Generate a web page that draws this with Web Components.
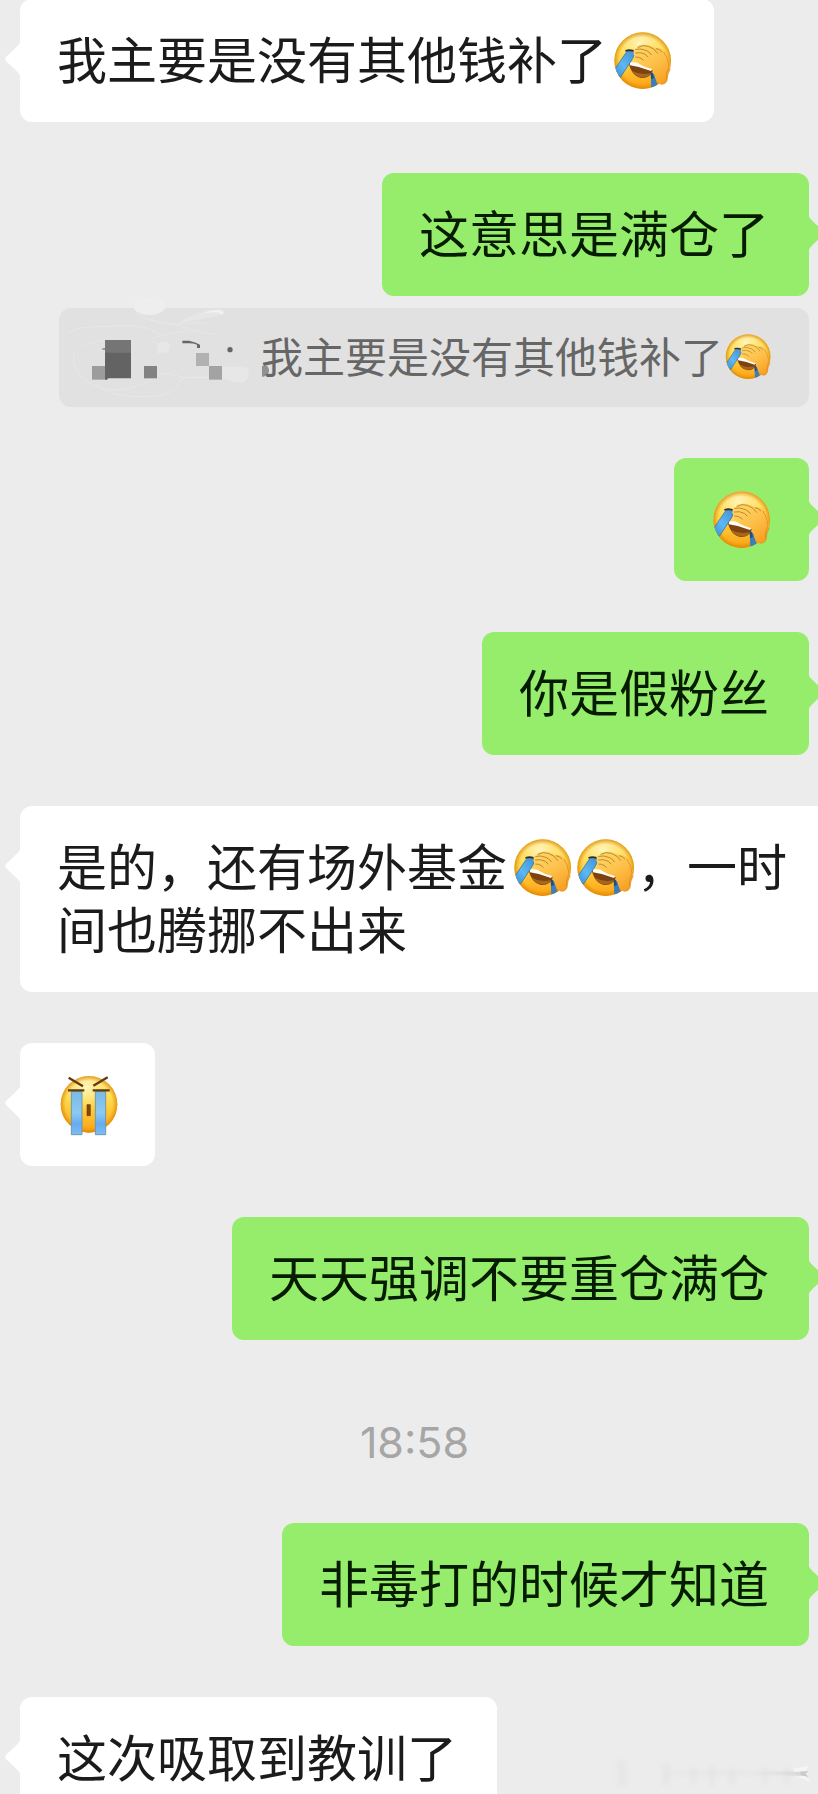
<!DOCTYPE html>
<html lang="zh-CN">
<head>
<meta charset="utf-8">
<meta name="viewport" content="width=device-width, initial-scale=1">
<title>聊天记录</title>
<style>
  body { margin: 0; background: #ececec; font-family: "Noto Sans CJK SC", sans-serif; }
</style>
</head>
<body>
<chat-log>
  <chat-bubble side="left">我主要是没有其他钱补了<emoji-palm></emoji-palm></chat-bubble>
  <chat-reply>
    <chat-bubble side="right">这意思是满仓了</chat-bubble>
    <chat-quote slot="quote">我主要是没有其他钱补了<emoji-palm></emoji-palm></chat-quote>
  </chat-reply>
  <chat-bubble side="right" sticker><emoji-palm></emoji-palm></chat-bubble>
  <chat-bubble side="right">你是假粉丝</chat-bubble>
  <chat-bubble side="left" wide>是的，还有场外基金<emoji-palm></emoji-palm><emoji-palm></emoji-palm>，一时间也腾挪不出来</chat-bubble>
  <chat-bubble side="left" sticker><emoji-cry></emoji-cry></chat-bubble>
  <chat-bubble side="right">天天强调不要重仓满仓</chat-bubble>
  <chat-time>18:58</chat-time>
  <chat-bubble side="right">非毒打的时候才知道</chat-bubble>
  <chat-bubble side="left">这次吸取到教训了</chat-bubble>
</chat-log>

<script>
const define = (name, html) => {
  const template = document.createElement('template');
  template.innerHTML = html;
  customElements.define(name, class extends HTMLElement {
    constructor() {
      super();
      this.attachShadow({ mode: 'open' }).append(template.content.cloneNode(true));
    }
  });
};

define('chat-log', `
<style>
  :host { display: block; position: relative; height: 100vh; overflow: hidden; }
  main { display: flex; flex-direction: column; gap: 51px; margin-top: -1px; padding: 0 9px 0 20px; }
  .stamp { position: absolute; right: 0; bottom: 0; width: 238px; height: 54px; }
</style>
<main><slot></slot></main>
<svg class="stamp" viewBox="0 0 714 162" aria-hidden="true">
  <defs>
    <filter id="soft" x="-20%" y="-20%" width="140%" height="140%"><feGaussianBlur stdDeviation="6"/></filter>
    <linearGradient id="fade" x1="0" x2="1"><stop offset="0" stop-color="#ddd" stop-opacity="0"/><stop offset="1" stop-color="#ccc"/></linearGradient>
  </defs>
  <g filter="url(#soft)" fill="#e4e4e4">
    <path d="M112 60h28v78h-28zM246 70h26v66h-26zM330 80h18v56h-18zM388 80h16v56h-16zM445 85h22v50h-22zM545 80h18v56h-18zM612 80h16v56h-16z" opacity=".7"/>
    <path d="M260 96h410v8H260z"/>
  </g>
  <path d="M520 93l150 2v12l-150-2z" fill="url(#fade)" opacity=".6"/>
  <path d="M640 86l46-9-8 16-36 2zM640 112l34-4 18 18-10-2-12-9z" fill="#f5f5f5"/>
  <path d="M660 95l26-2-10 8 10 10-22-5z" fill="#cacaca"/>
</svg>`);

define('chat-bubble', `
<style>
  :host { display: block; position: relative; align-self: flex-start; box-sizing: border-box;
          padding: 27px 40px 33px 37px; border-radius: 12px; background: #fff; color: #1b1b1b;
          font-size: 50px; line-height: 63px; }
  :host([side=right]) { align-self: flex-end; background: #95ed6b; color: #061c00; }
  :host([sticker]) { padding: 27px 36px 33px; }
  :host([wide]) { align-self: stretch; margin-right: -9px; padding-right: 20px;
          border-radius: 12px 0 0 12px; }
  :host(:not([sticker])) ::slotted(:first-child) { margin-left: 4px; }
  .tail { position: absolute; left: -15px; top: 42px; width: 16px; height: 36px; fill: #fff; }
  :host([side=right]) .tail { left: auto; right: -15px; fill: #95ed6b; transform: scaleX(-1); }
</style>
<svg class="tail" viewBox="0 0 16 36" aria-hidden="true"><path d="M16 0Q14 4 11 6.500L1.500 15.500Q-1 18 1.500 20.500L11 29.500Q14 32 16 36z"/></svg>
<slot></slot>`);

define('chat-reply', `
<style>
  :host { display: flex; flex-direction: column; gap: 12px; }
</style>
<slot></slot><slot name="quote"></slot>`);

define('chat-quote', `
<style>
  :host { display: flex; justify-content: flex-end; align-self: flex-end; border-radius: 12px;
          background: #e1e1e1; color: #666; font-size: 42px; line-height: 51px;
          --emoji-width: 50px; --emoji-height: 45px; --emoji-drop: 5px; }
  .name { flex: none; display: block; width: 202px; height: 99px; overflow: visible; }
  .text { padding: 21px 36px 27px 0; }
</style>
<svg class="name" viewBox="27 54 606 297" aria-hidden="true">
  <g fill="none" stroke="#e8e8e8" stroke-width="3" stroke-linecap="round">
    <path d="M48 135C80 105 130 112 210 108S300 118 330 135"/>
    <path d="M75 180C60 220 80 260 130 285S220 325 310 318S370 270 410 262H500"/>
    <path d="M140 285C180 310 250 300 300 270S350 250 400 262"/>
    <path d="M262 72C300 100 350 90 400 110S480 130 500 135" stroke-width="2"/>
    <path d="M300 90C340 115 420 95 470 100" stroke-width="2"/>
    <path d="M100 165C120 155 140 160 160 150M300 150C340 130 380 125 440 122" stroke-width="2"/>
  </g>
  <ellipse cx="298" cy="49" rx="48" ry="26" fill="#eee"/>
  <path d="M375 108C420 70 470 60 510 57Q530 64 518 74C490 84 460 78 375 108z" fill="#e6e6e6"/>
  <path d="M455 72C480 60 500 58 518 62Q526 70 514 74C500 62 480 68 455 72z" fill="#f1f1f1"/>
  <path d="M322 160l28-6 12 12-8 20-32 4zM516 230h70q12 8 10 30q-10 18-30 18q-20 0-34-10h-16z" fill="#e7e7e7"/>
  <path d="M165 150h78v39h-78z" fill="#757575"/>
  <path d="M165 188h78v77h-68l-4 4h-6z" fill="#636363"/>
  <path d="M126 228h39v41h-39z" fill="#9c9c9c"/>
  <path d="M282 228h39v37h-39z" fill="#828282"/>
  <path d="M438 189h39v39h-39z" fill="#b1b1b1"/>
  <path d="M477 228h39v41h-39z" fill="#a3a3a3"/>
  <path d="M636 228h16q6 8 5 16q-2 14-21 17z" fill="#909090"/>
  <path d="M397 152h20q20 4 33 12v10h-9v-10q-10-4-24-4h-20z" fill="#666"/>
  <path d="M157 177h16" stroke="#777" stroke-width="4"/>
  <circle cx="540" cy="179" r="8" fill="#666"/>
</svg>
<div class="text"><slot></slot></div>`);

define('chat-time', `
<style>
  :host { display: block; padding-top: 21px; text-align: center; color: #a6a6a6;
          font: 43px/60px Inter, "Liberation Sans", sans-serif; }
</style>
<time><slot></slot></time>`);

const emojiStyle = `
<style>
  :host { display: inline-block; vertical-align: top; width: var(--emoji-width, 63px);
          height: var(--emoji-height, 57px); margin-top: var(--emoji-drop, 6px); }
  svg { display: block; width: 100%; height: 100%; overflow: visible; }
</style>`;

const faceGradients = `
<linearGradient id="face" x1="0" y1="0" x2="0" y2="1">
  <stop offset="0" stop-color="#ffe480"/><stop offset=".35" stop-color="#ffdd55"/>
  <stop offset=".7" stop-color="#ffc12e"/><stop offset="1" stop-color="#fb9f14"/>
</linearGradient>
<radialGradient id="rim" cx=".5" cy=".5" r=".5">
  <stop offset=".82" stop-color="#e08a00" stop-opacity="0"/><stop offset="1" stop-color="#d98200" stop-opacity=".75"/>
</radialGradient>
<radialGradient id="shine" cx=".45" cy=".2" r=".4">
  <stop offset="0" stop-color="#fff6bd"/><stop offset="1" stop-color="#ffe98a" stop-opacity="0"/>
</radialGradient>`;

define('emoji-palm', emojiStyle + `
<svg viewBox="42 36 189 171" role="img" aria-label="捂脸">
  <defs>${faceGradients}
    <linearGradient id="hand" x1=".2" y1="0" x2=".8" y2="1"><stop offset="0" stop-color="#ffd768"/><stop offset=".5" stop-color="#fdc04a"/><stop offset="1" stop-color="#f89e1e"/></linearGradient>
    <linearGradient id="tear" x1="1" y1="0" x2="0" y2="1"><stop offset="0" stop-color="#3f8fd0"/><stop offset=".55" stop-color="#5eb8f4"/><stop offset="1" stop-color="#3187d0"/></linearGradient>
    <clipPath id="disc"><circle cx="137" cy="122" r="85"/></clipPath>
  </defs>
  <circle cx="137" cy="122" r="85" fill="url(#face)"/>
  <circle cx="137" cy="122" r="85" fill="url(#shine)"/>
  <circle cx="137" cy="122" r="85" fill="url(#rim)"/>
  <g clip-path="url(#disc)">
    <path d="M95 128Q112 127 168 150Q160 174 137 174Q104 171 95 128z" fill="#7d4210"/>
    <path d="M104 152Q135 168 163 158Q153 174 135 172Q114 170 104 152z" fill="#a8651c"/>
    <path d="M97 126Q125 124 168 145L162 153Q130 140 99 136z" fill="#fffdf6"/>
    <path d="M91 92L115 97L107 116L70 172L48 156z" fill="url(#tear)" stroke="#27689f" stroke-width="2"/>
    <path d="M161 158L172 162L184 205L163 208z" fill="#3a7fbc"/>
    <path d="M160 156L167 158L171 174L163 178z" fill="#264d75"/>
  </g>
  <path d="M87 92Q102 87 118 97" fill="none" stroke="#332b2b" stroke-width="5" stroke-linecap="round"/>
  <path d="M110 96Q108 86 120 85Q120 75 134 75Q143 71 156 76L178 84Q198 82 207 98Q218 121 220 146Q211 160 210 182Q204 195 190 192Q178 188 172 165Q170 152 164 147L143 140Q125 133 117 124Q108 116 113 107Q107 103 110 96z" fill="url(#hand)"/>
  <path d="M220 146Q211 160 210 182Q204 195 190 192" fill="none" stroke="#dd8a1a" stroke-width="2"/>
  <g fill="none" stroke="#9e6510" stroke-width="2" stroke-linecap="round">
    <path d="M123 82Q137 73 154 79Q172 84 182 100"/>
    <path d="M116 88Q131 84 149 92Q160 98 163 104"/>
    <path d="M115 99Q130 95 145 103L153 111"/>
    <path d="M116 111Q126 110 135 117L139 121"/>
    <path d="M178 86Q187 87 194 95"/>
  </g>
  <path d="M200 96Q214 112 216 140Q207 158 208 178" fill="none" stroke="#cf8519" stroke-width="2"/>
</svg>`);

define('emoji-cry', emojiStyle + `
<svg viewBox="165 138 189 171" role="img" aria-label="大哭">
  <defs>${faceGradients}
    <linearGradient id="stream" x1="0" y1="0" x2="0" y2="1"><stop offset="0" stop-color="#78b9e6"/><stop offset=".5" stop-color="#8ccaf2"/><stop offset=".75" stop-color="#67abf0"/><stop offset="1" stop-color="#7ebcf5"/></linearGradient>
  </defs>
  <circle cx="264" cy="223" r="85" fill="url(#face)"/>
  <circle cx="264" cy="223" r="85" fill="url(#shine)"/>
  <circle cx="264" cy="223" r="85" fill="url(#rim)"/>
  <g fill="url(#stream)" stroke="#6a9aae" stroke-width="3">
    <path d="M211 184h32v130h-32zM283 184h31v130h-31z"/>
  </g>
  <path d="M201 181h49M275 181h51M203 143l43 26M320 142l-43 25" fill="none" stroke="#603b0b" stroke-width="7"/>
  <path d="M258 224h10v33h-10z" fill="#80470d" stroke="#6b390a" stroke-width="2"/>
</svg>`);
</script>
</body>
</html>
